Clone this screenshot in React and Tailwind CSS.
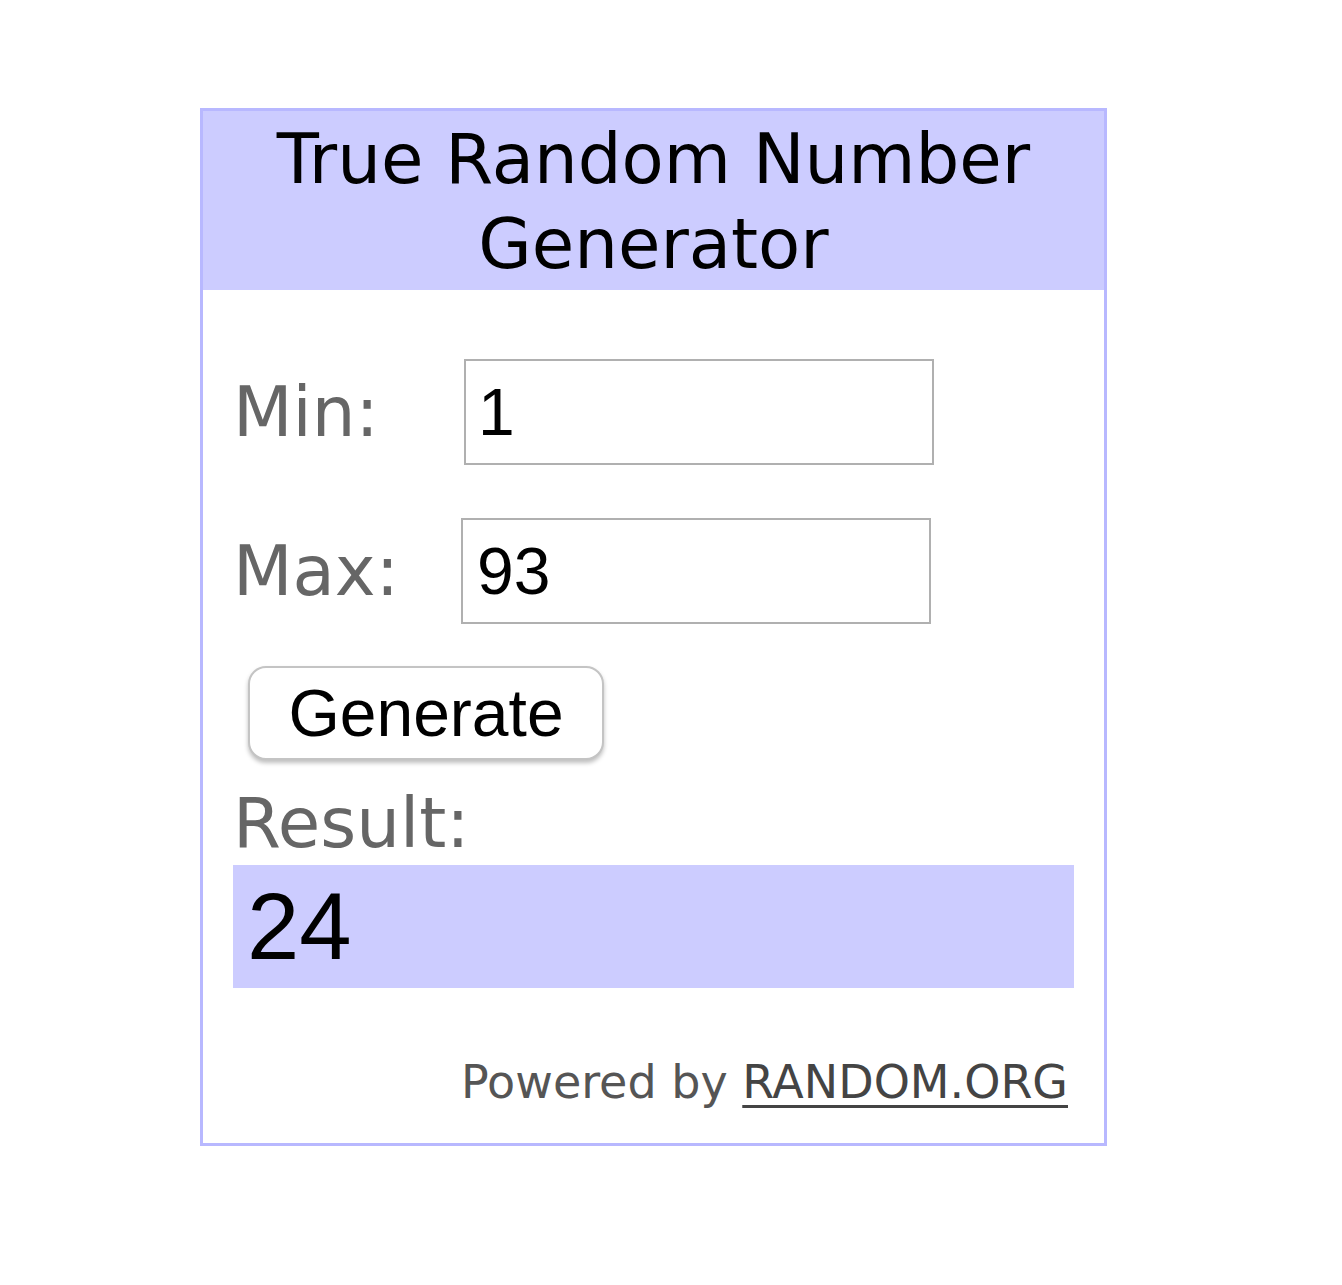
export default function App() {
  const label = "text-[69px] text-[#666666] leading-[77px] font-['DejaVu_Sans',_Verdana,_sans-serif]";
  const inputCls =
    "h-[106px] w-[470px] border-2 border-[#b0b0b0] bg-white pl-[12px] text-[66px] text-black outline-none font-['Liberation_Sans',_Arial,_sans-serif]";
  return (
    <div className="min-h-[1285px] w-[1342px] bg-white">
      <div className="pl-[200px] pt-[108px]">
        <div className="flex h-[1038px] w-[907px] flex-col border-[3px] border-[#b8b8ff] bg-white">
          <div className="h-[179px] bg-[#ccccff] pt-[6px] text-center text-[69px] leading-[85px] text-black font-['DejaVu_Sans',_Verdana,_sans-serif]">
            <div>True Random Number</div>
            <div>Generator</div>
          </div>
          <div className="flex flex-1 flex-col px-[30px] pt-[69px]">
            <div className="flex items-center">
              <div className={label + " w-[231px]"}>Min:</div>
              <input className={inputCls} defaultValue="1" readOnly />
            </div>
            <div className="mt-[53px] flex items-center">
              <div className={label + " w-[228px]"}>Max:</div>
              <input className={inputCls + " pl-[14px]"} defaultValue="93" readOnly />
            </div>
            <div className="mt-[42px] pl-[15px]">
              <button className="h-[94px] w-[356px] rounded-[18px] border-2 border-[#c4c4c4] bg-white text-[66px] leading-none text-black shadow-[0_3px_4px_rgba(0,0,0,0.25)] font-['Liberation_Sans',_Arial,_sans-serif]">
                Generate
              </button>
            </div>
            <div className={label + " mt-[25px]"}>Result:</div>
            <div className="mt-[3px] h-[123px] bg-[#ccccff] pl-[14px] pt-[13px] text-[94px] leading-[98px] text-black font-['Liberation_Sans',_Arial,_sans-serif]">
              24
            </div>
            <div className="mt-[68px] pr-[6px] text-right text-[46px] leading-[52px] text-[#555555] font-['DejaVu_Sans',_Verdana,_sans-serif]">
              Powered by{" "}
              <a className="text-[#444444] underline decoration-[3px] underline-offset-[7px]" href="#">
                RANDOM.ORG
              </a>
            </div>
          </div>
        </div>
      </div>
    </div>
  );
}
